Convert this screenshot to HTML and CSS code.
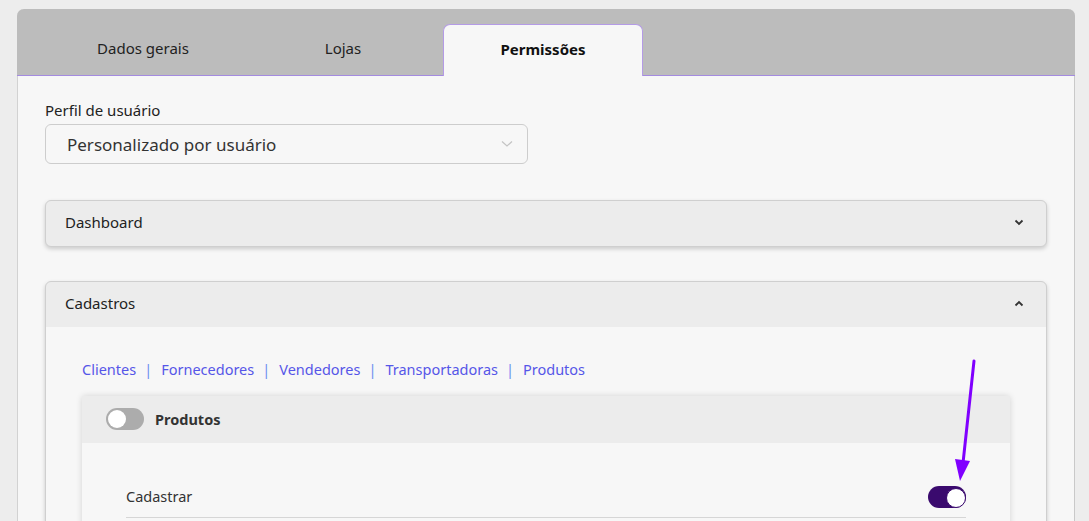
FILE: index.html
```html
<!DOCTYPE html>
<html lang="pt-BR">
<head>
    <meta charset="UTF-8">
    <title>Permissões</title>
    <link rel="stylesheet" href="styles.css">
</head>
<body>
    <div class="card">
        <div class="tabs">
            <div class="tab">Dados gerais</div>
            <div class="tab">Lojas</div>
            <div class="tab active">Permissões</div>
        </div>

        <div class="card-body">
            <div class="field">
                <label>Perfil de usuário</label>
                <div class="select">
                    <span>Personalizado por usuário</span>
                    <svg width="12" height="8" viewBox="0 0 12 8"><path d="M1 1.5 L6 6 L11 1.5" fill="none" stroke="#c4c4c4" stroke-width="1.2"/></svg>
                </div>
            </div>

            <div class="accordion">
                <div class="acc-header">
                    <span>Dashboard</span>
                    <svg width="10" height="7" viewBox="0 0 10 7"><path d="M1.5 1.5 L5 5 L8.5 1.5" fill="none" stroke="#333" stroke-width="1.8"/></svg>
                </div>
            </div>

            <div class="accordion open">
                <div class="acc-header">
                    <span>Cadastros</span>
                    <svg width="10" height="7" viewBox="0 0 10 7"><path d="M1.5 5.5 L5 2 L8.5 5.5" fill="none" stroke="#333" stroke-width="1.8"/></svg>
                </div>
                <div class="acc-body">
                    <nav class="links">
                        <a href="#">Clientes</a><span class="sep">|</span><a href="#">Fornecedores</a><span class="sep">|</span><a href="#">Vendedores</a><span class="sep">|</span><a href="#">Transportadoras</a><span class="sep">|</span><a href="#">Produtos</a>
                    </nav>

                    <div class="perm-card">
                        <div class="perm-header">
                            <span class="switch"></span>
                            <strong>Produtos</strong>
                        </div>
                        <div class="perm-body">
                            <div class="perm-row">
                                <span>Cadastrar</span>
                                <span class="switch on"></span>
                                <svg class="arrow" width="30" height="130" viewBox="0 0 30 130">
                                    <path d="M24 4 L13 106" stroke="#8000ff" stroke-width="3" stroke-linecap="round" fill="none"/>
                                    <path d="M5 102 L20 104 L10 124 Z" fill="#8000ff"/>
                                </svg>
                            </div>
                        </div>
                    </div>
                </div>
            </div>
        </div>
    </div>
</body>
</html>
```

FILE: styles.css
```css
* {
    box-sizing: border-box;
    margin: 0;
    padding: 0;
}

body {
    font-family: "Noto Sans", Lato, sans-serif;
    background-color: #ededed;
    color: #333;
    padding: 9px 14px 0 17px;
    height: 521px;
    overflow: hidden;
}

.card {
    background-color: #f7f7f7;
    border-radius: 7px 7px 0 0;
    border-left: 1px solid #d2d2d2;
    border-right: 1px solid #c9c9c9;
    height: 600px;
}

.tabs {
    display: flex;
    height: 67px;
    padding: 15px 0 0 26px;
    background-color: #bcbcbc;
    border-radius: 7px 7px 0 0;
    border-bottom: 1px solid #a48be0;
    margin: 0 -1px;
}

.tab {
    width: 200px;
    display: flex;
    align-items: center;
    justify-content: center;
    font-size: 15px;
    color: #222;
    padding-bottom: 4px;
}

.tab.active {
    background-color: #f7f7f7;
    border: 1px solid #b49be6;
    border-bottom: none;
    border-radius: 7px 7px 0 0;
    margin-bottom: -1px;
    font-weight: bold;
    color: #111;
    width: 200px;
}

.card-body {
    padding: 24px 27px 0 27px;
}

.field label {
    display: block;
    font-size: 15px;
    color: #222;
    margin-bottom: 4px;
}

.select {
    width: 483px;
    height: 40px;
    border: 1px solid #cdcdcd;
    border-radius: 6px;
    display: flex;
    align-items: center;
    justify-content: space-between;
    padding: 0 14px 0 21px;
    font-size: 17px;
    color: #333;
}

.accordion {
    border: 1px solid #cfcfcf;
    border-radius: 6px;
    background-color: #ececec;
    box-shadow: 0 2px 4px rgba(0, 0, 0, 0.18);
    margin-top: 36px;
    overflow: hidden;
}

.accordion.open {
    margin-top: 34px;
}

.acc-header {
    height: 45px;
    display: flex;
    align-items: center;
    justify-content: space-between;
    padding: 0 22px 3px 19px;
    font-size: 15px;
    color: #222;
}

.acc-body {
    background-color: #f7f7f7;
    padding: 32px 36px 0 36px;
    height: 300px;
}

.links {
    font-size: 14.5px;
    margin-bottom: 17px;
}

.links a {
    color: #5656e8;
    text-decoration: none;
}

.links .sep {
    color: #6a8ef0;
    margin: 0 9px 0 8px;
}

.perm-card {
    background-color: #f7f7f7;
    box-shadow: 0 0 6px rgba(0, 0, 0, 0.15);
    border-radius: 3px;
    height: 200px;
}

.perm-header {
    height: 47px;
    background-color: #ececec;
    display: flex;
    align-items: center;
    padding: 0 0 2px 24px;
    gap: 11px;
    font-size: 14.5px;
    color: #333;
}

.switch {
    display: inline-block;
    position: relative;
    width: 38px;
    height: 22px;
    border-radius: 11px;
    background-color: #acacac;
}

.switch::after {
    content: "";
    position: absolute;
    top: 2px;
    left: 2px;
    width: 18px;
    height: 18px;
    border-radius: 50%;
    background-color: #fff;
}

.switch.on {
    background-color: #3a0a6e;
}

.switch.on::after {
    left: 18px;
    border: 1px solid #3a0a6e;
}

.perm-body {
    padding: 39px 44px 0 44px;
}

.perm-row {
    position: relative;
    display: flex;
    align-items: center;
    justify-content: space-between;
    height: 36px;
    border-bottom: 1px solid #d6d6d6;
    padding-bottom: 8px;
    font-size: 14.5px;
    color: #333;
}

.perm-row .switch {
    margin-top: 2px;
}

.arrow {
    position: absolute;
    right: -14px;
    bottom: 30px;
}
```
